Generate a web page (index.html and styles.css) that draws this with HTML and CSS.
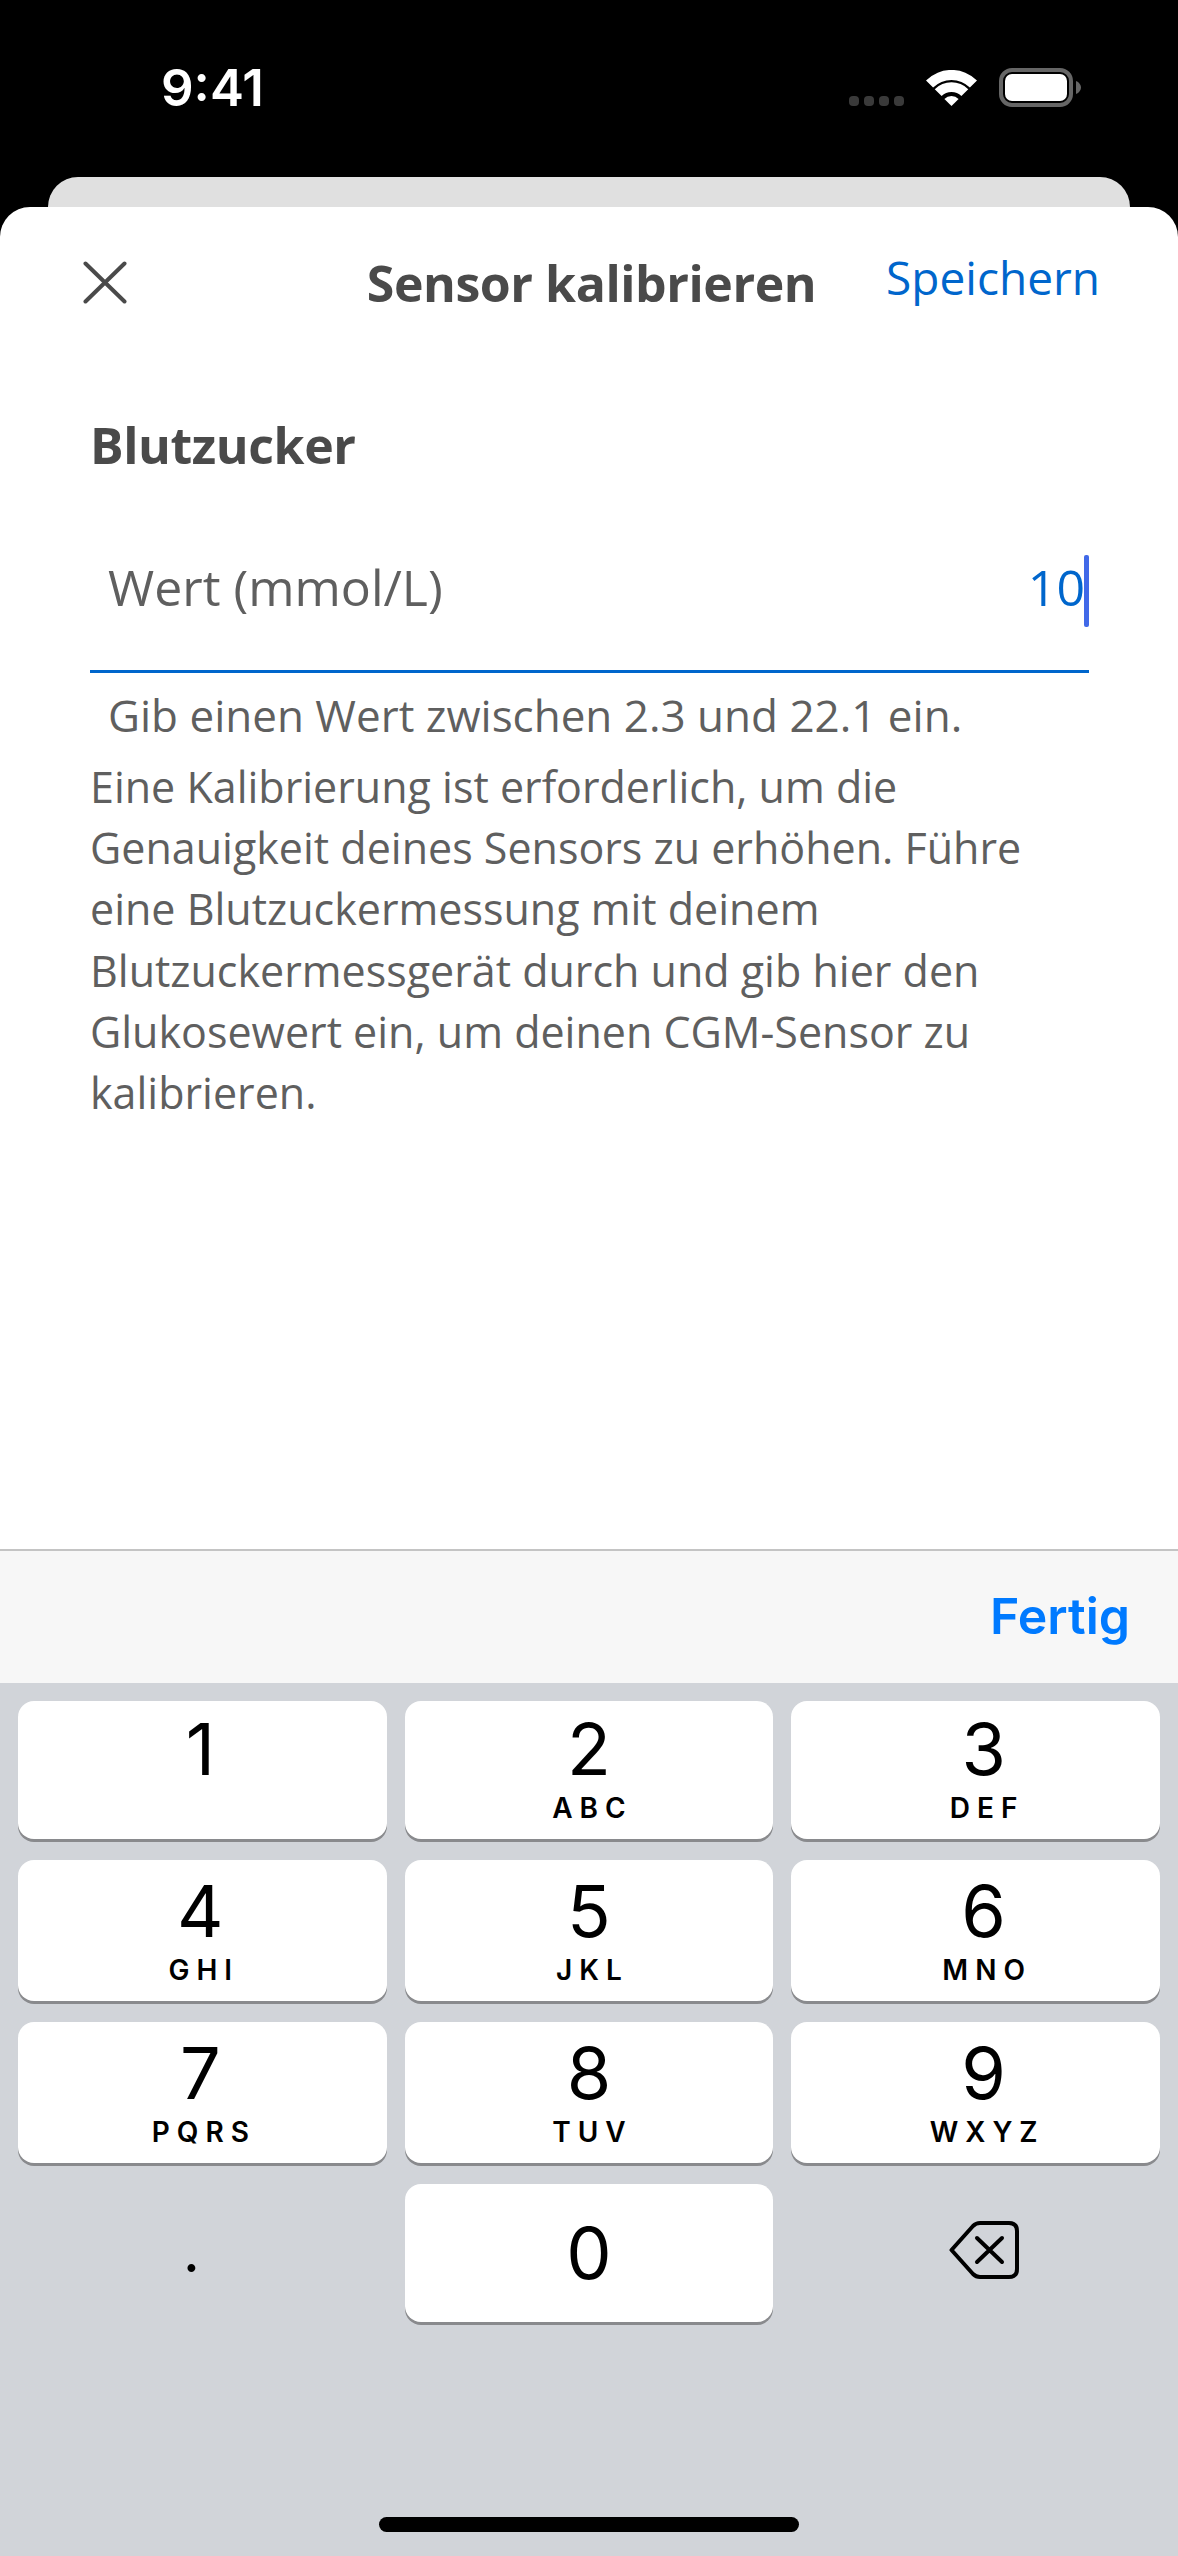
FILE: index.html
```html
<!DOCTYPE html>
<html lang="de">
<head>
    <meta charset="UTF-8">
    <meta name="viewport" content="width=device-width, initial-scale=1.0">
    <title>Sensor kalibrieren</title>
    <link rel="stylesheet" href="styles.css">
</head>
<body>
    <div class="phone">
        <div class="status-bar">
            <span class="time">9:41</span>
            <div class="status-icons">
                <div class="cell-dots"><i></i><i></i><i></i><i></i></div>
                <svg class="wifi" width="51" height="37" viewBox="0 0 51 37">
                    <path fill="#fff" d="M0 10.5A36 36 0 0 1 51 10.5L43.9 17.6A26 26 0 0 0 7.1 17.6Z"/>
                    <path fill="#fff" d="M8.74 19.24A23.7 23.7 0 0 1 42.26 19.24L35.4 26.1A14 14 0 0 0 15.6 26.1Z"/>
                    <path fill="#fff" d="M18.4 28.9A10 10 0 0 1 32.6 28.9L25.5 36Z"/>
                </svg>
                <svg class="battery" width="82" height="39" viewBox="0 0 82 39">
                    <rect x="2" y="2" width="70" height="35" rx="11" fill="none" stroke="#666" stroke-width="4"/>
                    <rect x="6" y="6" width="62" height="27" rx="7" fill="#fff"/>
                    <path fill="#666" d="M77 13C80 14 82 17 82 19.500C82 22 80 25 77 26Z"/>
                </svg>
            </div>
        </div>
        <div class="back-card"></div>

        <div class="sheet">
            <div class="nav">
                <svg class="close-icon" width="44" height="43" viewBox="0 0 44 43">
                    <path d="M2.500 2.500L41.500 40.500M41.500 2.500L2.500 40.500" fill="none" stroke="#4a4a4a" stroke-width="4" stroke-linecap="round"/>
                </svg>
                <h1 class="nav-title">Sensor kalibrieren</h1>
                <a class="nav-save">Speichern</a>
            </div>

            <div class="content">
                <h2 class="section-title">Blutzucker</h2>
                <div class="field">
                    <span class="field-label">Wert (mmol/L)</span>
                    <span class="field-value">10</span>
                    <span class="caret"></span>
                </div>
                <p class="hint">Gib einen Wert zwischen 2.3 und 22.1 ein.</p>
                <p class="description">Eine Kalibrierung ist erforderlich, um die<br>Genauigkeit deines Sensors zu erhöhen. Führe<br>eine Blutzuckermessung mit deinem<br>Blutzuckermessgerät durch und gib hier den<br>Glukosewert ein, um deinen CGM-Sensor zu<br>kalibrieren.</p>
            </div>

            <div class="toolbar">
                <span class="done">Fertig</span>
            </div>

            <div class="keyboard">
                <div class="keys">
                    <div class="key key-left"><span class="digit">1</span></div>
                    <div class="key"><span class="digit">2</span><span class="letters">ABC</span></div>
                    <div class="key key-right"><span class="digit">3</span><span class="letters">DEF</span></div>
                    <div class="key key-left key-tall"><span class="digit">4</span><span class="letters">GHI</span></div>
                    <div class="key key-tall"><span class="digit">5</span><span class="letters">JKL</span></div>
                    <div class="key key-right key-tall"><span class="digit">6</span><span class="letters">MNO</span></div>
                    <div class="key key-left key-tall"><span class="digit">7</span><span class="letters">PQRS</span></div>
                    <div class="key key-tall"><span class="digit">8</span><span class="letters">TUV</span></div>
                    <div class="key key-right key-tall"><span class="digit">9</span><span class="letters">WXYZ</span></div>
                    <div class="key key-plain"><span class="dot">.</span></div>
                    <div class="key key-zero"><span class="digit">0</span></div>
                    <div class="key key-plain">
                        <svg class="backspace" width="70" height="58" viewBox="0 0 70 58">
                            <path d="M2.500 29L24 5Q27 2 31 2H60Q68 2 68 10V48Q68 56 60 56H31Q27 56 24 53Z" fill="none" stroke="#000" stroke-width="4" stroke-linejoin="round"/>
                            <path d="M28 17L53 41M53 17L28 41" fill="none" stroke="#000" stroke-width="4" stroke-linecap="round"/>
                        </svg>
                    </div>
                </div>
                <div class="home-indicator"></div>
            </div>
        </div>
    </div>
</body>
</html>
```

FILE: styles.css
```css
* {
    margin: 0;
    padding: 0;
    box-sizing: border-box;
}

body {
    background-color: #000;
    font-family: "Open Sans", "Lato", sans-serif;
}

.phone {
    width: 1178px;
    height: 2556px;
    display: flex;
    flex-direction: column;
    background-color: #000;
    overflow: hidden;
}

/* status bar */
.status-bar {
    height: 177px;
    flex-shrink: 0;
    display: flex;
    justify-content: space-between;
    align-items: flex-start;
    padding: 57px 97px 0 161px;
    color: #fff;
}

.time {
    font-family: "Inter", sans-serif;
    font-size: 51px;
    font-weight: 600;
    line-height: 62px;
}

.status-icons {
    display: flex;
    align-items: flex-end;
    padding-top: 11px;
}

.cell-dots {
    display: flex;
    gap: 5px;
    margin-right: 22px;
    margin-bottom: 1px;
}

.cell-dots i {
    width: 10px;
    height: 10px;
    border-radius: 4px;
    background-color: #3a3a3a;
}

.wifi {
    margin-right: 22px;
}

.back-card {
    height: 30px;
    flex-shrink: 0;
    margin: 0 48px;
    background-color: #e0e0e0;
    border-radius: 30px 30px 0 0;
}

/* sheet */
.sheet {
    flex: 1;
    display: flex;
    flex-direction: column;
    background-color: #fff;
    border-radius: 30px 30px 0 0;
}

.nav {
    height: 151px;
    flex-shrink: 0;
    display: grid;
    grid-template-columns: 1fr auto 1fr;
    align-items: center;
    padding: 0 78px 0 83px;
}

.nav-title {
    font-size: 50px;
    font-weight: 700;
    letter-spacing: -0.45px;
    color: #4a4a4a;
    text-align: center;
}

.nav-save {
    justify-self: end;
    font-size: 46px;
    color: #0066cc;
    margin-bottom: 11px;
}

.content {
    flex: 1;
    padding: 57px 89px 0 90px;
    color: #5f5f5f;
}

.section-title {
    font-size: 50px;
    font-weight: 700;
    letter-spacing: -0.4px;
    line-height: 60px;
    color: #4a4a4a;
}

.field {
    height: 143px;
    margin-top: 55px;
    display: flex;
    align-items: center;
    padding: 0 0 18px 18px;
    border-bottom: 3px solid #0066cc;
    font-size: 50px;
}

.field-label {
    flex: 1;
    margin-bottom: 8px;
}

.field-value {
    color: #0066cc;
    margin-right: -1px;
    margin-bottom: 8px;
}

.caret {
    width: 5px;
    height: 72px;
    background-color: #4169e8;
    border-radius: 2px;
}

.hint {
    margin-top: 17px;
    padding-left: 18px;
    font-size: 44px;
    line-height: 50px;
}

.description {
    margin-top: 16px;
    font-size: 43px;
    line-height: 61.2px;
}

/* keyboard */
.toolbar {
    height: 134px;
    flex-shrink: 0;
    display: flex;
    justify-content: flex-end;
    align-items: center;
    padding: 0 48px 2px 0;
    background-color: #f7f7f7;
    border-top: 2px solid #c4c4c4;
}

.done {
    font-family: "Inter", sans-serif;
    font-size: 50px;
    font-weight: 600;
    color: #007aff;
}

.keyboard {
    height: 873px;
    flex-shrink: 0;
    display: flex;
    flex-direction: column;
    background-color: #d1d4d9;
    padding: 18px 18px 24px;
}

.keys {
    display: grid;
    grid-template-columns: repeat(3, 1fr);
    grid-template-rows: 138px 141px 141px 138px;
    gap: 21px 18px;
}

.key {
    display: flex;
    flex-direction: column;
    align-items: center;
    background-color: #fff;
    border-radius: 16px;
    box-shadow: 0 3px 0 #898a8d;
    font-family: "Inter", sans-serif;
    color: #000;
}

.key-left {
    padding-right: 4px;
}

.key-right {
    padding-left: 16px;
}

.key-tall {
    padding-top: 3px;
}

.digit {
    font-size: 72px;
    line-height: 84px;
    margin-top: 6px;
}

.letters {
    font-size: 28px;
    font-weight: 600;
    line-height: 34px;
    letter-spacing: 7px;
    margin-right: -7px;
}

.key-zero {
    justify-content: center;
}

.key-zero .digit {
    margin-top: 0;
}

.key-plain {
    background: none;
    box-shadow: none;
    justify-content: center;
}

.backspace {
    margin-left: 16px;
    margin-bottom: 6px;
}

.dot {
    font-size: 60px;
    line-height: 48px;
    margin-right: 22px;
    margin-bottom: 6px;
}

.home-indicator {
    width: 420px;
    height: 15px;
    margin: auto auto 0;
    background-color: #000;
    border-radius: 8px;
}
```
